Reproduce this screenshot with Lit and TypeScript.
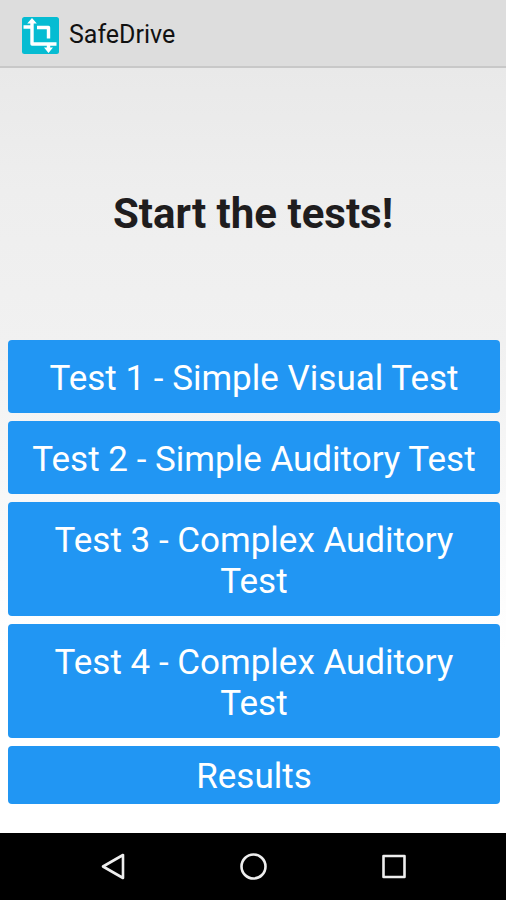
import { LitElement, html, css } from "lit";
import { customElement } from "lit/decorators.js";

interface TestEntry {
  label: string;
  compact?: boolean;
}

const entries: TestEntry[] = [
  { label: "Test 1 - Simple Visual Test" },
  { label: "Test 2 - Simple Auditory Test" },
  { label: "Test 3 - Complex Auditory Test" },
  { label: "Test 4 - Complex Auditory Test" },
  { label: "Results", compact: true },
];

@customElement("app-bar")
export class AppBar extends LitElement {
  static styles = css`
    :host {
      display: block;
    }
    .bar {
      display: flex;
      align-items: center;
      gap: 10px;
      height: 68px;
      box-sizing: border-box;
      padding: 4px 22px 0;
      background: #dddddd;
      border-bottom: 2px solid #c8c8c8;
    }
    .logo {
      display: block;
      width: 37px;
      height: 37px;
    }
    .title {
      margin: 0;
      font-size: 25px;
      line-height: 32px;
      font-weight: 400;
      color: #111111;
    }
  `;

  render() {
    return html`
      <header class="bar">
        <svg class="logo" viewBox="0 0 37 37" aria-hidden="true">
          <rect width="37" height="37" rx="2.5" fill="#06bcd2" />
          <g fill="none" stroke="#ffffff" stroke-width="3.4" stroke-linejoin="round">
            <path d="M1.5 10H9.5M10 5V27H34.5" />
            <path d="M15 10.5H26.5V21.5" />
            <path d="M26.5 27V32" />
          </g>
          <path d="M10 1L14.8 6.5H5.2Z M26.5 36L22 30.5H31Z" fill="#ffffff" />
        </svg>
        <h2 class="title">SafeDrive</h2>
      </header>
    `;
  }
}

@customElement("system-nav")
export class SystemNav extends LitElement {
  static styles = css`
    :host {
      display: block;
    }
    .nav {
      display: grid;
      grid-template-columns: repeat(3, 1fr);
      height: 67px;
      box-sizing: border-box;
      padding: 0 43px;
      background: #000000;
    }
    .key {
      display: flex;
      align-items: center;
      justify-content: center;
      padding: 0;
      border: 0;
      background: none;
      cursor: pointer;
    }
    .glyph {
      display: block;
      width: 30px;
      height: 30px;
      fill: none;
      stroke: #eeeeee;
      stroke-width: 2.6;
      stroke-linejoin: round;
    }
  `;

  render() {
    return html`
      <nav class="nav" aria-label="System">
        <button class="key" aria-label="Back">
          <svg class="glyph" viewBox="0 0 30 30"><path d="M25 3V26L5 14.5Z" /></svg>
        </button>
        <button class="key" aria-label="Home">
          <svg class="glyph" viewBox="0 0 30 30"><circle cx="15.5" cy="14.5" r="12" /></svg>
        </button>
        <button class="key" aria-label="Recent apps">
          <svg class="glyph" viewBox="0 0 30 30"><rect x="5.5" y="4" width="21" height="21" /></svg>
        </button>
      </nav>
    `;
  }
}

@customElement("app-root")
export class AppRoot extends LitElement {
  static styles = css`
    :host {
      display: flex;
      flex-direction: column;
      min-height: 100vh;
      font-family: Roboto, "Liberation Sans", sans-serif;
      background: #ffffff;
    }
    .content {
      flex: 1;
      display: flex;
      flex-direction: column;
      background: linear-gradient(#e9e9e9, #eeeeee 16%, #f1f1f1 36%, #ffffff 76%);
    }
    .hero {
      flex: 1;
      display: flex;
      align-items: center;
      justify-content: center;
      padding: 20px 8px 0;
    }
    .heading {
      margin: 0;
      font-size: 42px;
      line-height: 50px;
      font-weight: 700;
      text-align: center;
      color: #1f1d1e;
    }
    .list {
      display: flex;
      flex-direction: column;
      gap: 8px;
      padding: 0 6px 29px 8px;
    }
    .entry {
      width: 100%;
      padding: 18px 16px 14px;
      border: 0;
      border-radius: 4px;
      background: #2196f3;
      color: #ffffff;
      font-family: inherit;
      font-size: 35px;
      line-height: 41px;
      text-align: center;
      cursor: pointer;
    }
    .entry.compact {
      padding: 10px 16px 7px;
    }
  `;

  render() {
    return html`
      <app-bar></app-bar>
      <main class="content">
        <div class="hero"><h1 class="heading">Start the tests!</h1></div>
        <div class="list">
          ${entries.map(
            (entry) => html`
              <button class="entry ${entry.compact ? "compact" : ""}">${entry.label}</button>
            `,
          )}
        </div>
      </main>
      <system-nav></system-nav>
    `;
  }
}
